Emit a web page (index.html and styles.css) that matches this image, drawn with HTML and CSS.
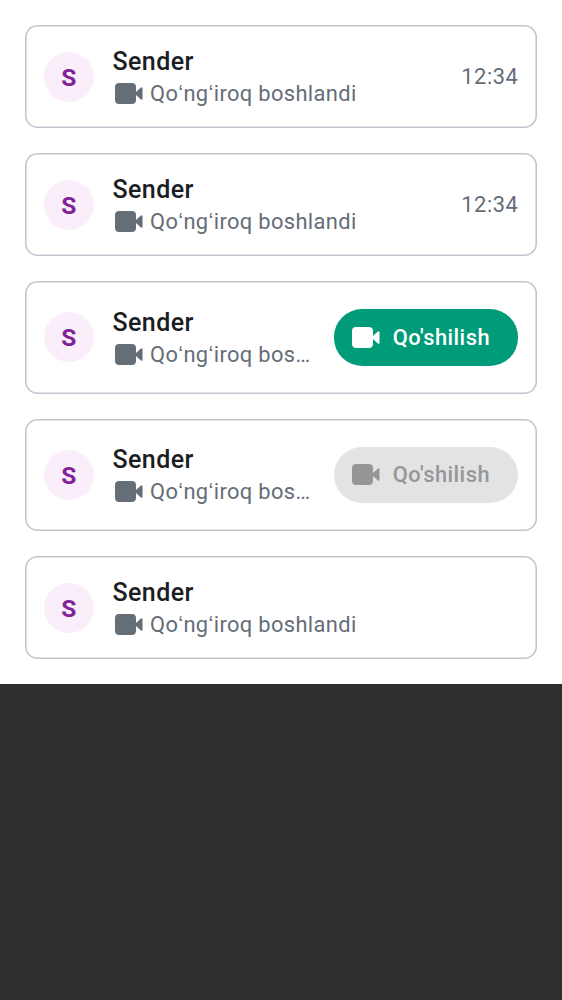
FILE: index.html
```
<!DOCTYPE html>
<html lang="uz">
<head>
<meta charset="utf-8">
<title>Qo‘ng‘iroq</title>
<link rel="stylesheet" href="styles.css">
</head>
<body>
<svg width="0" height="0" class="defs"><symbol id="video" viewBox="0 0 28 21"><path d="M4.2 0H16.8Q21 0 21 4.2V9L25.6 4.8Q27.5 3.4 27.5 5.4V15.6Q27.5 17.6 25.6 16.2L21 12V16.8Q21 21 16.8 21H4.2Q0 21 0 16.8V4.2Q0 0 4.2 0Z"/></symbol></svg>
<main class="list">
  <article class="card">
    <div class="avatar">S</div>
    <div class="info"><div class="name">Sender</div><div class="status"><svg class="icon"><use href="#video"/></svg><span class="label">Qoʻngʻiroq boshlandi</span></div></div>
    <time class="time">12:34</time>
  </article>
  <article class="card">
    <div class="avatar">S</div>
    <div class="info"><div class="name">Sender</div><div class="status"><svg class="icon"><use href="#video"/></svg><span class="label">Qoʻngʻiroq boshlandi</span></div></div>
    <time class="time">12:34</time>
  </article>
  <article class="card tall">
    <div class="avatar">S</div>
    <div class="info"><div class="name">Sender</div><div class="status"><svg class="icon"><use href="#video"/></svg><span class="label">Qoʻngʻiroq boshlandi</span></div></div>
    <button class="join"><svg class="icon"><use href="#video"/></svg><span>Qo'shilish</span></button>
  </article>
  <article class="card tall">
    <div class="avatar">S</div>
    <div class="info"><div class="name">Sender</div><div class="status"><svg class="icon"><use href="#video"/></svg><span class="label">Qoʻngʻiroq boshlandi</span></div></div>
    <button class="join" disabled><svg class="icon"><use href="#video"/></svg><span>Qo'shilish</span></button>
  </article>
  <article class="card">
    <div class="avatar">S</div>
    <div class="info"><div class="name">Sender</div><div class="status"><svg class="icon"><use href="#video"/></svg><span class="label">Qoʻngʻiroq boshlandi</span></div></div>
  </article>
</main>
</body>
</html>
```
FILE: styles.css
```
* { box-sizing: border-box; }
body { margin: 0; min-height: 1000px; background: #2f2f2f; font-family: Roboto, sans-serif; }
.defs { display: block; }
.list { display: flex; flex-direction: column; gap: 25px; padding: 25px; background: #fff; }
.card { display: flex; align-items: center; height: 103.1px; padding: 0 18.75px; border-radius: 12.5px; box-shadow: inset 0 0 0 1.56px #c0c5ce; }
.tall { height: 112.5px; }
.avatar { flex: none; width: 50px; height: 50px; border-radius: 50%; background: #faeefb; color: #822198; font-size: 24.5px; font-weight: 700; line-height: 51px; text-align: center; }
.info { flex: 1; min-width: 0; margin-left: 18.75px; padding-bottom: 2.2px; }
.name { color: #1b1d22; font-size: 25px; font-weight: 500; line-height: 37.2px; letter-spacing: 0.4px; }
.status { display: flex; align-items: center; height: 28px; color: #656d77; font-size: 21.875px; line-height: 28px; letter-spacing: 0.36px; }
.icon { flex: none; display: block; width: 28px; height: 21px; fill: currentColor; }
.status .icon { margin: 0 7px 1.2px 2.5px; }
.label { min-width: 0; overflow: hidden; text-overflow: ellipsis; white-space: nowrap; }
.time { color: #656d77; font-size: 21.875px; letter-spacing: 0.5px; }
.join { flex: none; display: flex; align-items: center; gap: 13px; width: 184.5px; height: 56.25px; margin-left: 18.75px; padding: 0 0 0 18px; border: 0; border-radius: 28.125px; background: #009b78; color: #fff; font: 500 21.875px Roboto, sans-serif; letter-spacing: 0.48px; }
.join:disabled { background: #e3e3e3; color: #959698; }
```
